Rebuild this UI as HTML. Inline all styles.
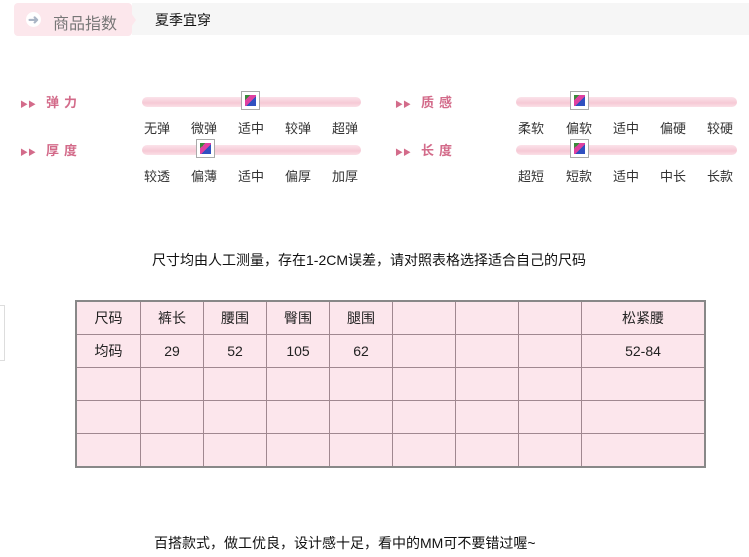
<!DOCTYPE html>
<html><head><meta charset="utf-8"><style>
body{margin:0;width:749px;height:557px;background:#fff;position:relative;overflow:hidden;font-family:"Liberation Sans","Noto Sans CJK SC",sans-serif;font-size:13px;color:#333}
.a{position:absolute;white-space:nowrap}
.bar{position:absolute;height:10px;border-radius:5px;background:linear-gradient(#fbe3ea,#f6c9d5 60%,#fbe0e7)}
.ic{position:absolute;width:17px;height:17px;border:1px solid #aaa;background:#fff}
.ic i{position:absolute;left:3px;top:3px;width:11px;height:11px;background:linear-gradient(135deg,#3a8a3a 0 25%,#e040a0 25% 55%,#3050c0 55%)}
.lab{position:absolute;color:#d36b8a;font-weight:bold;font-size:13px;letter-spacing:5px}
.lab b{font-size:8px;letter-spacing:0;margin-right:10px;color:#d36b8a}
.opts{position:absolute;font-size:13px;color:#333}
.opts span{position:absolute;white-space:nowrap}
table{position:absolute;left:75px;top:300px;border-collapse:collapse;background:#fce6ec;border:2px solid #888}
td{border:1px solid #a08890;height:32px;padding:0;text-align:center;font-size:14px;color:#222}
</style></head><body>
<div class="a" style="left:132px;top:3px;width:617px;height:32px;background:#f6f6f6"></div>
<div class="a" style="left:14px;top:3px;width:118px;height:33px;background:#fce7ec;border-radius:4px"></div>
<div class="a" style="left:129px;top:10px;width:0;height:0;border-top:10px solid transparent;border-bottom:10px solid transparent;border-left:7px solid #fce7ec"></div>
<div class="a" style="left:26px;top:12px;width:15px;height:15px;border-radius:50%;background:#fff;color:#aab5c5;font-size:13px;line-height:15px;text-align:center;font-weight:bold">➜</div>
<div class="a" style="left:53px;top:10px;font-size:16px;color:#777">商品指数</div>
<div class="a" style="left:155px;top:10px;font-size:14px;color:#111">夏季宜穿</div>

<div class="lab" style="left:20px;top:92px"><b>▶▶</b>弹力</div>
<div class="lab" style="left:20px;top:140px"><b>▶▶</b>厚度</div>
<div class="lab" style="left:395px;top:92px"><b>▶▶</b>质感</div>
<div class="lab" style="left:395px;top:140px"><b>▶▶</b>长度</div>

<div class="bar" style="left:142px;top:97px;width:219px"></div>
<div class="bar" style="left:142px;top:145px;width:219px"></div>
<div class="bar" style="left:516px;top:97px;width:221px"></div>
<div class="bar" style="left:516px;top:145px;width:221px"></div>
<div class="ic" style="left:241px;top:91px"><i></i></div>
<div class="ic" style="left:196px;top:139px"><i></i></div>
<div class="ic" style="left:570px;top:91px"><i></i></div>
<div class="ic" style="left:570px;top:139px"><i></i></div>

<div class="opts" style="left:0;top:118px"><span style="left:144px">无弹</span><span style="left:191px">微弹</span><span style="left:238px">适中</span><span style="left:285px">较弹</span><span style="left:332px">超弹</span>
<span style="left:518px">柔软</span><span style="left:566px">偏软</span><span style="left:613px">适中</span><span style="left:660px">偏硬</span><span style="left:707px">较硬</span></div>
<div class="opts" style="left:0;top:166px"><span style="left:144px">较透</span><span style="left:191px">偏薄</span><span style="left:238px">适中</span><span style="left:285px">偏厚</span><span style="left:332px">加厚</span>
<span style="left:518px">超短</span><span style="left:566px">短款</span><span style="left:613px">适中</span><span style="left:660px">中长</span><span style="left:707px">长款</span></div>

<div class="a" style="left:152px;top:250px;font-size:14px;color:#111">尺寸均由人工测量，存在1-2CM误差，请对照表格选择适合自己的尺码</div>
<div class="a" style="left:0;top:305px;width:4px;height:54px;border:1px solid #ddd;border-left:none"></div>

<table>
<tr><td style="width:63px">尺码</td><td style="width:62px">裤长</td><td style="width:62px">腰围</td><td style="width:62px">臀围</td><td style="width:62px">腿围</td><td style="width:62px"></td><td style="width:62px"></td><td style="width:62px"></td><td style="width:122px">松紧腰</td></tr>
<tr><td>均码</td><td>29</td><td>52</td><td>105</td><td>62</td><td></td><td></td><td></td><td>52-84</td></tr>
<tr><td></td><td></td><td></td><td></td><td></td><td></td><td></td><td></td><td></td></tr>
<tr><td></td><td></td><td></td><td></td><td></td><td></td><td></td><td></td><td></td></tr>
<tr><td></td><td></td><td></td><td></td><td></td><td></td><td></td><td></td><td></td></tr>
</table>

<div class="a" style="left:154px;top:533px;font-size:14px;color:#111">百搭款式，做工优良，设计感十足，看中的MM可不要错过喔~</div>
</body></html>
